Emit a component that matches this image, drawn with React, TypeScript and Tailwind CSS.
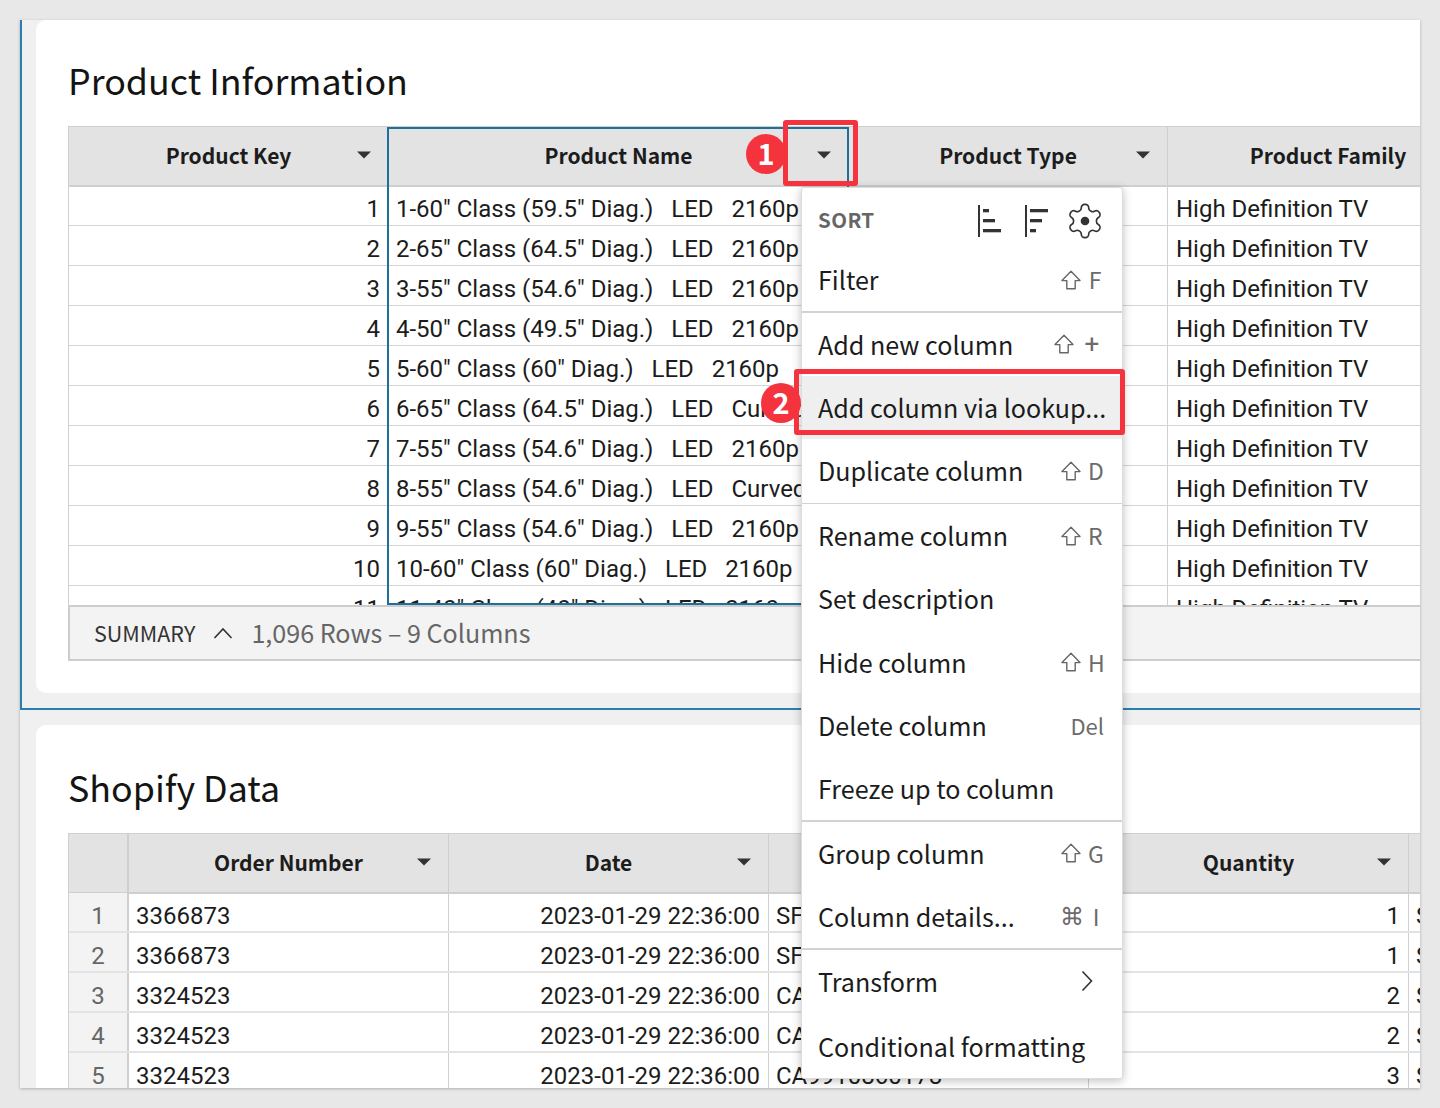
import React from "react";

const sans = "font-['Noto_Sans_CJK_JP',sans-serif]";

function Caret() {
  return (
    <svg width="14" height="8" viewBox="0 0 14 8" className="block">
      <path d="M0 0.5h14L7 7.5z" fill="#333" />
    </svg>
  );
}

function Head({ label, width, first }: { label: string; width: string; first?: boolean }) {
  return (
    <div className={`relative flex h-full shrink-0 items-center justify-center ${width} ${first ? "" : "border-l border-[#cfcfcf]"}`}>
      <span className={`${sans} text-[21px] font-semibold text-[#1c1c1c]`}>{label}</span>
      <span className="absolute right-[17px] top-[24px]"><Caret /></span>
    </div>
  );
}

const names = [
  '1-60" Class (59.5" Diag.)   LED   2160p',
  '2-65" Class (64.5" Diag.)   LED   2160p',
  '3-55" Class (54.6" Diag.)   LED   2160p',
  '4-50" Class (49.5" Diag.)   LED   2160p',
  '5-60" Class (60" Diag.)   LED   2160p',
  '6-65" Class (64.5" Diag.)   LED   Curved',
  '7-55" Class (54.6" Diag.)   LED   2160p',
  '8-55" Class (54.6" Diag.)   LED   Curved',
  '9-55" Class (54.6" Diag.)   LED   2160p',
  '10-60" Class (60" Diag.)   LED   2160p',
  '11-40" Class (40" Diag.)   LED   2160p',
];

const orders = [
  ["1", "3366873", "SF9910860178", "1"],
  ["2", "3366873", "SF9910860178", "1"],
  ["3", "3324523", "CA9910860178", "2"],
  ["4", "3324523", "CA9910860178", "2"],
  ["5", "3324523", "CA9910860178", "3"],
];

const cell = "font-[Roboto,sans-serif] text-[24px] leading-[46px] text-[#1c1c1c] whitespace-pre overflow-hidden";

function ShiftIcon() {
  return (
    <svg width="20" height="20" viewBox="0 0 20 20" className="block" fill="none" stroke="#666" strokeWidth="1.4" strokeLinejoin="round">
      <path d="M10 1.2 1 10.6H5.8V18.8H14.2V10.6H19Z" />
    </svg>
  );
}

function Shortcut({ k, shift = true, cmd, wide }: { k: string; shift?: boolean; cmd?: boolean; wide?: boolean }) {
  return (
    <span className={`flex items-center text-[23px] leading-none text-[#6b6b6b] ${wide ? "gap-[10px] pr-[3px]" : cmd ? "gap-[5px]" : "gap-[7px] pr-[1px]"}`}>
      {shift && <ShiftIcon />}
      {cmd && <span className="font-['DejaVu_Sans',sans-serif] text-[24px] leading-none">⌘</span>}
      <span className={`text-center ${wide ? "w-[16px] font-[Roboto,sans-serif] text-[26px]" : "w-[14px]"}`}>{k}</span>
    </span>
  );
}

function Item({ label, right, active, last }: { label: string; right?: React.ReactNode; active?: boolean; last?: boolean }) {
  return (
    <div className={`flex h-[63.25px] items-center justify-between pl-[16px] pr-[19px] ${active ? "bg-[#efefef]" : ""} ${last ? "mt-[1.5px]" : ""}`}>
      <span className="whitespace-nowrap text-[25.1px] leading-none text-[#1c1c1c]">{label}</span>
      {right}
    </div>
  );
}

function Sep() {
  return <div className="h-[1.5px] bg-[#d2d2d2]" />;
}

function Menu() {
  return (
    <div className={`${sans} absolute left-[781px] top-[167px] z-10 w-[322px] rounded-[3px] border border-[#dcdcdc] bg-white pt-[2px] shadow-[0_2px_10px_rgba(0,0,0,0.25)]`}>
      <div className="flex h-[58px] items-center justify-between pl-[16px] pr-[17px]">
        <span className="text-[20.5px] font-semibold tracking-[0.4px] text-[#666]">SORT</span>
        <span className="flex items-center pt-[3px]">
          <svg width="26" height="34" viewBox="0 0 26 34" className="block" fill="#333">
            <rect x="1" y="1" width="2" height="32" />
            <rect x="6" y="5" width="6" height="3.3" />
            <rect x="6" y="15" width="12" height="3.3" />
            <rect x="6" y="25" width="18" height="3.3" />
          </svg>
          <svg width="26" height="34" viewBox="0 0 26 34" className="ml-[21px] block" fill="#333">
            <rect x="1" y="1" width="2" height="32" />
            <rect x="6" y="5" width="18" height="3.3" />
            <rect x="6" y="15" width="12" height="3.3" />
            <rect x="6" y="25" width="6" height="3.3" />
          </svg>
          <svg width="40" height="40" viewBox="0 0 24 24" className="ml-[15px] block" fill="none" stroke="#333" strokeWidth="1">
            <path d="M12.22 2h-.44a2 2 0 0 0-2 2v.18a2 2 0 0 1-1 1.73l-.43.25a2 2 0 0 1-2 0l-.15-.08a2 2 0 0 0-2.73.73l-.22.38a2 2 0 0 0 .73 2.73l.15.1a2 2 0 0 1 1 1.72v.51a2 2 0 0 1-1 1.74l-.15.09a2 2 0 0 0-.73 2.73l.22.38a2 2 0 0 0 2.73.73l.15-.08a2 2 0 0 1 2 0l.43.25a2 2 0 0 1 1 1.73V20a2 2 0 0 0 2 2h.44a2 2 0 0 0 2-2v-.18a2 2 0 0 1 1-1.73l.43-.25a2 2 0 0 1 2 0l.15.08a2 2 0 0 0 2.73-.73l.22-.39a2 2 0 0 0-.73-2.73l-.15-.08a2 2 0 0 1-1-1.74v-.5a2 2 0 0 1 1-1.74l.15-.09a2 2 0 0 0 .73-2.73l-.22-.38a2 2 0 0 0-2.73-.73l-.15.08a2 2 0 0 1-2 0l-.43-.25a2 2 0 0 1-1-1.73V4a2 2 0 0 0-2-2z" />
            <circle cx="12" cy="12" r="2.6" fill="#333" stroke="none" />
          </svg>
        </span>
      </div>
      <Item label="Filter" right={<Shortcut k="F" />} />
      <Sep />
      <Item label="Add new column" right={<Shortcut k="+" wide />} />
      <Item label="Add column via lookup..." active />
      <Item label="Duplicate column" right={<Shortcut k="D" />} />
      <Sep />
      <Item label="Rename column" right={<Shortcut k="R" />} />
      <Item label="Set description" />
      <Item label="Hide column" right={<Shortcut k="H" />} />
      <Item label="Delete column" right={<span className="-mr-px text-[22px] text-[#6b6b6b]">Del</span>} />
      <Item label="Freeze up to column" />
      <Sep />
      <Item label="Group column" right={<Shortcut k="G" />} />
      <Item label="Column details..." right={<Shortcut k="I" shift={false} cmd />} />
      <Sep />
      <Item
        label="Transform"
        right={
          <svg width="12" height="22" viewBox="0 0 12 22" className="mr-[10px] block" fill="none" stroke="#333" strokeWidth="1.6">
            <path d="M1.5 1.5 10.5 11 1.5 20.5" />
          </svg>
        }
      />
      <Item label="Conditional formatting" last />
    </div>
  );
}

function Badge({ n, className }: { n: string; className: string }) {
  return (
    <div className={`${sans} absolute z-30 flex h-[40px] w-[40px] items-center justify-center rounded-full bg-[#f5333f] pb-[3px] text-[29px] font-bold leading-none text-white ${className}`}>
      {n}
    </div>
  );
}

export default function App() {
  return (
    <div className="h-[1108px] w-[1440px] overflow-hidden bg-[#e8e8e8] px-[20px] pt-[20px]">
      <div className="relative h-[1068px] w-[1400px] overflow-hidden bg-[#f0f0f0] shadow-[0_1px_3px_rgba(0,0,0,0.25)]">
        {/* Section 1 */}
        <section className="flex h-[690px] border-b-2 border-l-2 border-[#2b7fae] pb-[15px] pl-[14px]">
          <div className="flex flex-1 flex-col overflow-hidden rounded-l-[10px] bg-white pl-[32px]">
            <div className="flex h-[106px] shrink-0 items-center pt-[14px]">
              <h2 className={`${sans} text-[35.8px] font-normal leading-none text-[#141414]`}>Product Information</h2>
            </div>
            <div className="flex h-[61px] shrink-0 border-b-[2px] border-l border-t border-[#cfcfcf] bg-[#e3e3e3]">
              <Head label="Product Key" width="w-[319px]" first />
              <Head label="Product Name" width="w-[460px]" />
              <Head label="Product Type" width="w-[319px]" />
              <Head label="Product Family" width="w-[321px]" />
            </div>
            <div className="-mt-px h-[419px] shrink-0 overflow-hidden border-l border-[#d0d0d0]">
              {names.map((name, i) => (
                <div key={name} className="flex h-[40px] border-b border-[#d4d4d4]">
                  <div className={`${cell} w-[319px] shrink-0 pr-[8px] text-right`}>{i + 1}</div>
                  <div className={`${cell} w-[460px] shrink-0 pl-[8px]`}>{name}</div>
                  <div className={`${cell} w-[319px] shrink-0 border-l border-[#d0d0d0]`} />
                  <div className={`${cell} w-[321px] shrink-0 border-l border-[#d0d0d0] pl-[8px]`}>High Definition TV</div>
                </div>
              ))}
            </div>
            <div className={`${sans} flex h-[56px] shrink-0 items-center border-2 border-r-0 border-[#cdcdcd] bg-[#f3f3f3] pl-[24px]`}>
              <span className="text-[21.5px] text-[#333]">SUMMARY</span>
              <svg width="20" height="12" viewBox="0 0 20 12" className="ml-[18px] block" fill="none" stroke="#333" strokeWidth="1.6">
                <path d="M1.5 11 10 2l8.5 9" />
              </svg>
              <span className="ml-[18px] text-[25.1px] text-[#666]">1,096 Rows – 9 Columns</span>
            </div>
          </div>
        </section>

        {/* Section 2 */}
        <section className="flex h-[378px] pl-[16px] pt-[15px]">
          <div className="flex flex-1 flex-col overflow-hidden rounded-tl-[10px] bg-white pl-[32px]">
            <div className="flex h-[108px] shrink-0 items-center pt-[16px]">
              <h2 className={`${sans} text-[35.8px] font-normal leading-none text-[#141414]`}>Shopify Data</h2>
            </div>
            <div className="flex h-[61px] shrink-0 border-b-[2px] border-l border-t border-[#cfcfcf] bg-[#e3e3e3]">
              <div className="h-full w-[60px] shrink-0 border-r-[2px] border-[#cfcfcf]" />
              <Head label="Order Number" width="w-[319px]" first />
              <Head label="Date" width="w-[320px]" />
              <Head label="" width="w-[320px]" />
              <Head label="Quantity" width="w-[320px]" />
              <div className="h-full w-[40px] shrink-0 border-l border-[#cfcfcf]" />
            </div>
            <div className="-mt-px flex-1 overflow-hidden border-l border-[#d0d0d0]">
              {orders.map((o) => (
                <div key={o[0]} className="flex h-[40px] border-b-2 border-[#e3e3e3]">
                  <div className="w-[60px] shrink-0 border-r-[2px] border-[#cfcfcf] bg-[#f3f3f3] text-center font-[Roboto,sans-serif] text-[24px] leading-[46px] text-[#666]">{o[0]}</div>
                  <div className={`${cell} w-[319px] shrink-0 pl-[7px]`}>{o[1]}</div>
                  <div className={`${cell} w-[320px] shrink-0 border-l border-[#d0d0d0] pr-[8px] text-right`}>2023-01-29 22:36:00</div>
                  <div className={`${cell} w-[320px] shrink-0 border-l border-[#d0d0d0] pl-[7px]`}>{o[2]}</div>
                  <div className={`${cell} w-[320px] shrink-0 border-l border-[#d0d0d0] pr-[8px] text-right`}>{o[3]}</div>
                  <div className={`${cell} w-[40px] shrink-0 border-l border-[#d0d0d0] pl-[7px]`}>SF</div>
                </div>
              ))}
            </div>
          </div>
        </section>

        {/* Selected column outline */}
        <div className="pointer-events-none absolute left-[367px] top-[107px] z-[5] h-[478px] w-[462px] border-2 border-[#1f6f9b]" />

        <Menu />

        {/* Annotations */}
        <div className="absolute left-[763px] top-[100px] z-20 h-[66px] w-[75px] rounded-[3px] border-[5px] border-[#f5333f]" />
        <div className="absolute left-[774px] top-[349px] z-20 h-[66px] w-[331px] rounded-[3px] border-[5px] border-[#f5333f]" />
        <Badge n="1" className="left-[726px] top-[114px]" />
        <Badge n="2" className="left-[741px] top-[363px]" />
      </div>
    </div>
  );
}
